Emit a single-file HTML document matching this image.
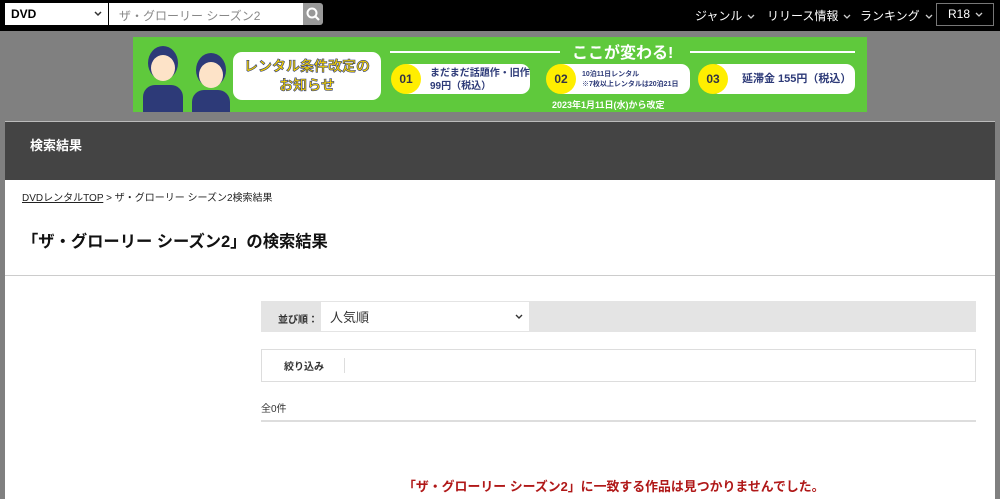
<!DOCTYPE html>
<html><head><meta charset="utf-8"><style>
*{margin:0;padding:0;box-sizing:border-box}
body{width:1000px;height:499px;overflow:hidden;background:#808080;font-family:"Liberation Sans","Noto Sans CJK JP",sans-serif;position:relative}
.a{position:absolute}
.hdr{left:0;top:0;width:1000px;height:31px;background:#000}
.nav{color:#fff;font-size:12px;top:7px;white-space:nowrap}
.chev{display:inline-block;width:8px;height:6px;margin-left:5px;vertical-align:middle}
.wrap{left:5px;top:121px;width:990px;height:378px;background:#fff;border-top:1px solid #bbb}
.dark{left:5px;top:122px;width:990px;height:58px;background:#444}
.pill{background:#fff;border-radius:9px}
.circ{background:#ffee00;border-radius:50%;width:30px;height:30px;color:#334;font-weight:bold;font-size:12px;text-align:center;line-height:30px}
.bt{color:#2d3a78;font-weight:bold;font-size:10px;line-height:13px}
</style></head><body>
<div class="a hdr"></div>
<div class="a" style="left:5px;top:3px;width:103px;height:22px;background:#fff;font-size:12px;font-weight:bold;padding:4px 6px">DVD<svg class="a" style="right:6px;top:8px" width="8" height="6"><path d="M1 1l3 3 3-3" stroke="#333" stroke-width="1.5" fill="none"/></svg></div>
<div class="a" style="left:109px;top:3px;width:194px;height:22px;background:#fff;font-size:12px;color:#888;padding:4px 10px">ザ・グローリー シーズン2</div>
<div class="a" style="left:303px;top:3px;width:20px;height:22px;background:#999;border-radius:0 3px 3px 0"><svg width="20" height="22"><circle cx="9" cy="10" r="4.5" stroke="#fff" stroke-width="2" fill="none"/><path d="M12 13l4 4" stroke="#fff" stroke-width="2.2"/></svg></div>
<div class="a nav" style="left:695px">ジャンル<svg class="chev"><path d="M1 1l3 3 3-3" stroke="#ccc" stroke-width="1.3" fill="none"/></svg></div>
<div class="a nav" style="left:767px">リリース情報<svg class="chev"><path d="M1 1l3 3 3-3" stroke="#ccc" stroke-width="1.3" fill="none"/></svg></div>
<div class="a nav" style="left:860px">ランキング<svg class="chev"><path d="M1 1l3 3 3-3" stroke="#ccc" stroke-width="1.3" fill="none"/></svg></div>
<div class="a nav" style="left:936px;top:3px;width:58px;height:23px;border:1px solid #777;padding:3px 0 0 11px">R18<svg class="chev"><path d="M1 1l3 3 3-3" stroke="#ccc" stroke-width="1.3" fill="none"/></svg></div>

<div class="a" style="left:133px;top:37px;width:734px;height:75px;background:#5fc93c"></div>
<div class="a" style="left:143px;top:85px;width:40px;height:27px;background:#2d3a78;border-radius:12px 12px 0 0"></div>
<div class="a" style="left:148px;top:46px;width:30px;height:34px;background:#2d3a78;border-radius:50%"></div>
<div class="a" style="left:151px;top:55px;width:24px;height:26px;background:#fde3c8;border-radius:50%"></div>
<div class="a" style="left:192px;top:90px;width:38px;height:22px;background:#2d3a78;border-radius:12px 12px 0 0"></div>
<div class="a" style="left:196px;top:53px;width:30px;height:34px;background:#2d3a78;border-radius:50%"></div>
<div class="a" style="left:199px;top:62px;width:24px;height:26px;background:#fde3c8;border-radius:50%"></div>
<div class="a pill" style="left:233px;top:52px;width:148px;height:48px;text-align:center;color:#f2d000;font-weight:bold;font-size:14px;line-height:19px;padding-top:5px;-webkit-text-stroke:0.6px #2d3a78">レンタル条件改定の<br>お知らせ</div>
<div class="a" style="left:390px;top:51px;width:170px;height:2px;background:#fff"></div>
<div class="a" style="left:690px;top:51px;width:165px;height:2px;background:#fff"></div>
<div class="a" style="left:572px;top:39px;color:#fff;font-weight:bold;font-size:16px">ここが変わる!</div>
<div class="a pill" style="left:400px;top:64px;width:130px;height:30px"></div>
<div class="a circ" style="left:391px;top:64px">01</div>
<div class="a bt" style="left:430px;top:67px">まだまだ話題作・旧作<br>99円（税込）</div>
<div class="a pill" style="left:555px;top:64px;width:135px;height:30px"></div>
<div class="a circ" style="left:546px;top:64px">02</div>
<div class="a bt" style="left:582px;top:70px;font-size:7px;line-height:10px">10泊11日レンタル<br>※7枚以上レンタルは20泊21日</div>
<div class="a pill" style="left:710px;top:64px;width:145px;height:30px"></div>
<div class="a circ" style="left:698px;top:64px">03</div>
<div class="a bt" style="left:742px;top:73px;font-size:11px">延滞金 155円（税込）</div>
<div class="a" style="left:552px;top:98px;color:#fff;font-weight:bold;font-size:9px">2023年1月11日(水)から改定</div>

<div class="a wrap"></div>
<div class="a dark"></div>
<div class="a" style="left:30px;top:135px;color:#fff;font-weight:bold;font-size:13px">検索結果</div>
<div class="a" style="left:22px;top:189px;font-size:10px;color:#222"><span style="text-decoration:underline">DVDレンタルTOP</span> &gt; ザ・グローリー シーズン2検索結果</div>
<div class="a" style="left:22px;top:228px;font-size:16.3px;font-weight:bold;color:#111">「ザ・グローリー シーズン2」の検索結果</div>
<div class="a" style="left:5px;top:275px;width:990px;height:1px;background:#ccc"></div>

<div class="a" style="left:261px;top:301px;width:715px;height:31px;background:#e4e4e4"></div>
<div class="a" style="left:278px;top:311px;font-size:10px;font-weight:bold;color:#333">並び順：</div>
<div class="a" style="left:321px;top:302px;width:208px;height:29px;background:#fff;font-size:13px;color:#333;padding:5px 9px">人気順<svg class="a" style="right:6px;top:12px" width="8" height="6"><path d="M1 1l3 3 3-3" stroke="#333" stroke-width="1.4" fill="none"/></svg></div>
<div class="a" style="left:261px;top:349px;width:715px;height:33px;border:1px solid #ddd"></div>
<div class="a" style="left:284px;top:358px;font-size:10px;font-weight:bold;color:#333">絞り込み</div>
<div class="a" style="left:344px;top:358px;width:1px;height:15px;background:#ddd"></div>
<div class="a" style="left:261px;top:400px;font-size:10px;color:#333">全0件</div>
<div class="a" style="left:261px;top:420px;width:715px;height:2px;background:#ddd"></div>
<div class="a" style="left:403px;top:476px;font-size:12.9px;font-weight:bold;color:#b01818">「ザ・グローリー シーズン2」に一致する作品は見つかりませんでした。</div>
</body></html>
